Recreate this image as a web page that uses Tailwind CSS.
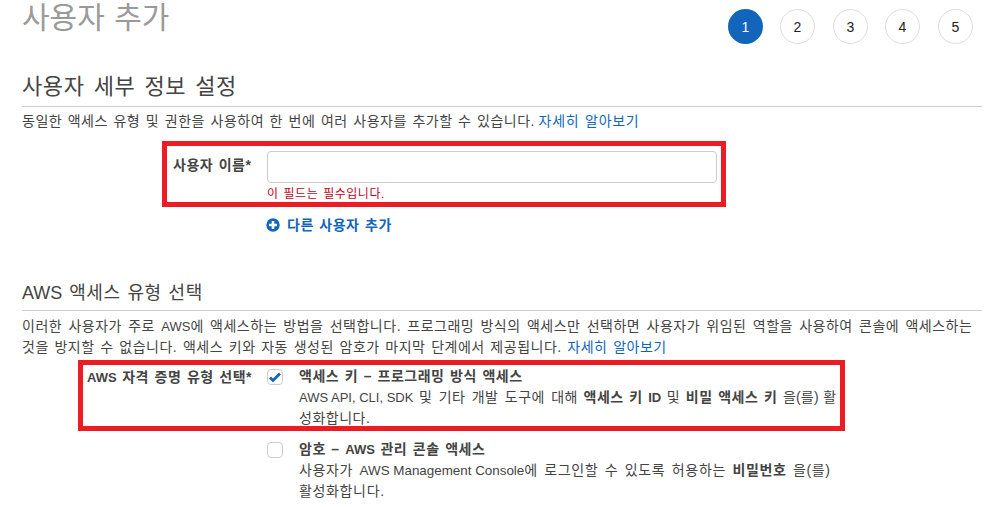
<!DOCTYPE html>
<html lang="ko">
<head>
    <meta charset="UTF-8">
    <title>사용자 추가</title>
    <script src="https://cdn.jsdelivr.net/npm/@tailwindcss/browser@4"></script>
</head>
<body class="bg-white overflow-hidden h-[507px] font-['Liberation_Sans','Noto_Sans_CJK_KR',sans-serif] text-[14px] leading-[20px] tracking-[0.5px] [word-spacing:1.2px] text-[#444]">
    <div class="pl-[22px] pr-[6px]">
        <!-- page header + wizard steps -->
        <div class="flex justify-between h-[44px]">
            <div class="text-[30px] leading-[36px] text-[#9a9a9a] tracking-normal [word-spacing:1px]">사용자 추가</div>
            <div class="flex pt-[9px] pr-[9px] tracking-normal">
                <div class="w-[35px] h-[35px] rounded-full bg-[#1166bb] text-white flex items-center justify-center">1</div>
                <div class="w-[35px] h-[35px] rounded-full border border-[#ddd] text-[#222] flex items-center justify-center ml-[17px]">2</div>
                <div class="w-[35px] h-[35px] rounded-full border border-[#ddd] text-[#222] flex items-center justify-center ml-[18px]">3</div>
                <div class="w-[35px] h-[35px] rounded-full border border-[#ddd] text-[#222] flex items-center justify-center ml-[17px]">4</div>
                <div class="w-[35px] h-[35px] rounded-full border border-[#ddd] text-[#222] flex items-center justify-center ml-[18px]">5</div>
            </div>
        </div>

        <!-- user details -->
        <div class="mt-[29px] text-[22px] leading-[28px] pb-[5px] border-b border-[#ccc] tracking-[0.6px] [word-spacing:2.4px]">사용자 세부 정보 설정</div>
        <p class="mt-[4px]">동일한 액세스 유형 및 권한을 사용하여 한 번에 여러 사용자를 추가할 수 있습니다. <a href="#" class="text-[#1166bb] ml-[-2px] tracking-[0.7px]">자세히 알아보기</a></p>

        <div class="ml-[140px] mt-[10px] w-[564px] h-[66px] border-[5px] border-[#ed1c24] flex">
            <div class="w-[100px] pl-[6px] pt-[9px] font-bold whitespace-nowrap">사용자 이름*</div>
            <div class="flex-1 pt-[5px] pr-[4px]">
                <div class="h-[32px] border border-[#ccc] rounded-[4px] bg-white"></div>
                <div class="text-[12px] leading-[16px] mt-[3px] text-[#c40022]">이 필드는 필수입니다.</div>
            </div>
        </div>

        <a href="#" class="ml-[244px] mt-[8px] flex items-center gap-[7px] font-bold text-[#1166bb] w-fit">
            <svg width="14" height="14" viewBox="0 0 14 14"><circle cx="7" cy="7" r="6.7" fill="#1166bb"/><path d="M7 3v8M3 7h8" stroke="#fff" stroke-width="2.6"/></svg>
            다른 사용자 추가
        </a>

        <!-- access type -->
        <div class="mt-[44px] text-[18px] leading-[28px] pb-[3px] border-b border-[#ccc] tracking-[0.6px] [word-spacing:1.2px]"><span class="tracking-normal">AWS</span> 액세스 유형 선택</div>
        <p class="mt-[5px]"><span class="[word-spacing:1.9px]">이러한 사용자가 주로 <span class="text-[13px] tracking-normal">AWS</span>에 액세스하는 방법을 선택합니다. 프로그래밍 방식의 액세스만 선택하면 사용자가 위임된 역할을 사용하여 콘솔에 액세스하는</span><br><span class="[word-spacing:1.3px]">것을 방지할 수 없습니다. 액세스 키와 자동 생성된 암호가 마지막 단계에서 제공됩니다. <a href="#" class="text-[#1166bb]">자세히 알아보기</a></span></p>

        <div class="ml-[56px] mt-[3px] w-[767px] h-[71px] border-[5px] border-[#ed1c24] flex leading-[21px]">
            <div class="w-[184px] shrink-0 pl-[4px] pt-[2px] font-bold whitespace-nowrap"><span class="text-[13px] tracking-normal">AWS</span> 자격 증명 유형 선택*</div>
            <div class="w-[32px] shrink-0 pt-[4px]">
                <div class="w-[16px] h-[16px] border border-[#ccc] rounded-[4px] flex items-center justify-center">
                    <svg width="12" height="10" viewBox="0 0 12 10"><path d="M1 5.5l3 3 7-7" fill="none" stroke="#1166bb" stroke-width="2.8"/></svg>
                </div>
            </div>
            <div class="flex-1 min-w-0 pt-[1px] whitespace-nowrap">
                <div class="font-bold">액세스 키 – 프로그래밍 방식 액세스</div>
                <div><span class="text-[13px] tracking-normal [word-spacing:0]">AWS API, CLI, SDK</span> <span class="[word-spacing:1.9px]">및 기타 개발 도구에 대해</span> <b>액세스 키 <span class="text-[13px] tracking-normal">ID</span></b> 및 <b>비밀 액세스 키</b> <span class="tracking-[0.2px] [word-spacing:0.4px]">을(를) 활</span><br>성화합니다.</div>
            </div>
        </div>

        <div class="ml-[245px] mt-[8px] flex leading-[21px] whitespace-nowrap">
            <div class="w-[32px] pt-[3px]">
                <div class="w-[16px] h-[16px] border border-[#ccc] rounded-[4px]"></div>
            </div>
            <div>
                <div class="font-bold">암호 – <span class="text-[13px] tracking-normal">AWS</span> 관리 콘솔 액세스</div>
                <div class="tracking-[0.65px] [word-spacing:1.9px]">사용자가 <span class="text-[13.4px] tracking-normal [word-spacing:0]">AWS Management Console</span>에 로그인할 수 있도록 허용하는 <b>비밀번호</b> 을(를)<br>활성화합니다.</div>
            </div>
        </div>
    </div>
</body>
</html>
